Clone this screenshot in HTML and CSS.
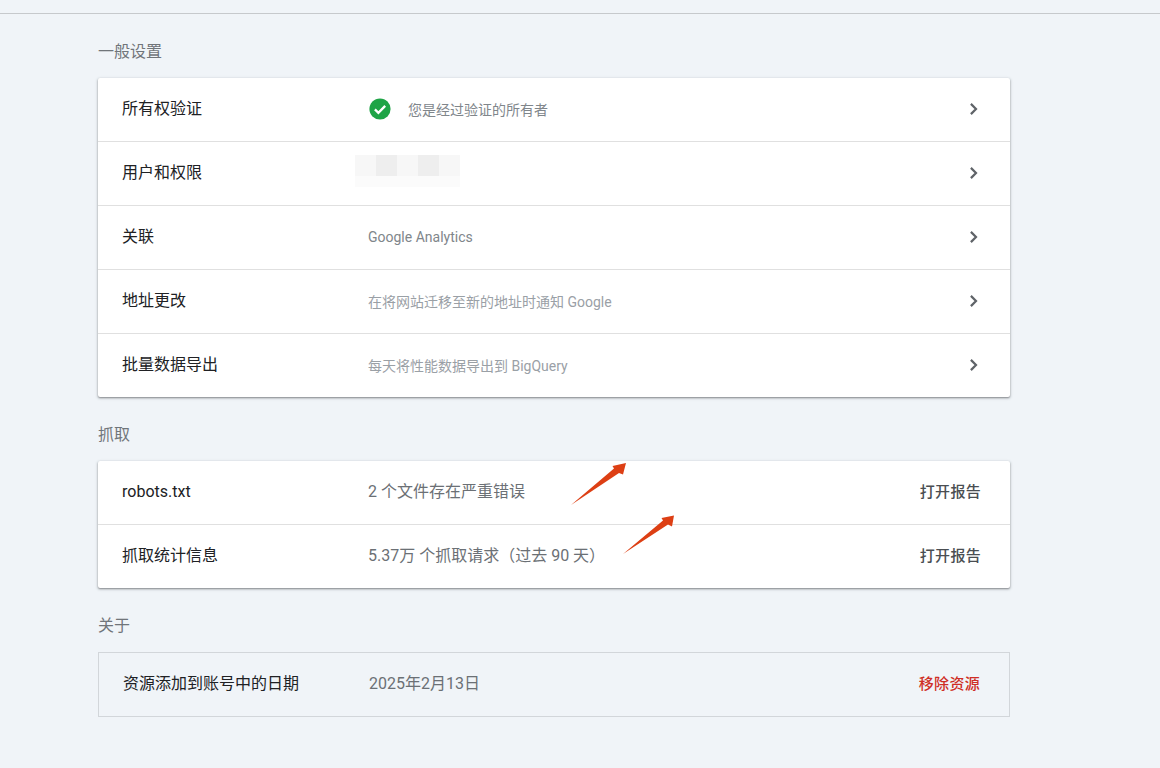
FILE: index.html
```html
<!DOCTYPE html>
<html lang="zh-CN">
<head>
<meta charset="utf-8">
<title>设置</title>
<link rel="stylesheet" href="styles.css">
</head>
<body>
<div class="topbar"></div>
<main class="content">
  <h2 class="section-title">一般设置</h2>
  <section class="card">
    <div class="row">
      <div class="label">所有权验证</div>
      <div class="value value-check">
        <svg class="check" viewBox="0 0 24 24" width="24" height="24"><circle cx="12" cy="12" r="10.600" fill="#1ea446"/><path d="M6.900 12.400l3.500 3.500 6.800-7" fill="none" stroke="#fff" stroke-width="2.300"/></svg>
        <span class="small soft drop">您是经过验证的所有者</span>
      </div>
      <svg class="chev" viewBox="0 0 12 12" width="12" height="12"><path d="M2.900 0.900L8 6l-5.100 5.100" fill="none" stroke="#5f6368" stroke-width="2.200"/></svg>
    </div>
    <div class="row">
      <div class="label">用户和权限</div>
      <div class="value">
        <div class="blur">
          <i class="b1"></i><i class="b2"></i><i class="b1"></i><i class="b2"></i><i class="b1"></i>
          <i class="b3"></i><i class="b3"></i><i class="b3"></i><i class="b3"></i><i class="b3"></i>
        </div>
      </div>
      <svg class="chev" viewBox="0 0 12 12" width="12" height="12"><path d="M2.900 0.900L8 6l-5.100 5.100" fill="none" stroke="#5f6368" stroke-width="2.200"/></svg>
    </div>
    <div class="row">
      <div class="label">关联</div>
      <div class="value small soft">Google Analytics</div>
      <svg class="chev" viewBox="0 0 12 12" width="12" height="12"><path d="M2.900 0.900L8 6l-5.100 5.100" fill="none" stroke="#5f6368" stroke-width="2.200"/></svg>
    </div>
    <div class="row">
      <div class="label">地址更改</div>
      <div class="value small faint drop">在将网站迁移至新的地址时通知 Google</div>
      <svg class="chev" viewBox="0 0 12 12" width="12" height="12"><path d="M2.900 0.900L8 6l-5.100 5.100" fill="none" stroke="#5f6368" stroke-width="2.200"/></svg>
    </div>
    <div class="row">
      <div class="label">批量数据导出</div>
      <div class="value small faint drop">每天将性能数据导出到 BigQuery</div>
      <svg class="chev" viewBox="0 0 12 12" width="12" height="12"><path d="M2.900 0.900L8 6l-5.100 5.100" fill="none" stroke="#5f6368" stroke-width="2.200"/></svg>
    </div>
  </section>

  <h2 class="section-title">抓取</h2>
  <section class="card">
    <div class="row">
      <div class="label">robots.txt</div>
      <div class="value">2 个文件存在严重错误</div>
      <a class="action">打开报告</a>
    </div>
    <div class="row">
      <div class="label">抓取统计信息</div>
      <div class="value">5.37万 个抓取请求（过去 90 天）</div>
      <a class="action">打开报告</a>
    </div>
    <svg class="arrow arrow-one" viewBox="0 0 56 44" width="56" height="44"><path d="M0 44L43 7.500 41.500 5 55 2 52 13.500 48 12Z" fill="#dd3f14"/></svg>
    <svg class="arrow arrow-two" viewBox="0 0 52 40" width="52" height="40"><path d="M0 40L40 6.500 38.500 4 51 1.500 49 12.500 45 10.500Z" fill="#dd3f14"/></svg>
  </section>

  <h2 class="section-title">关于</h2>
  <section class="card card-flat">
    <div class="row">
      <div class="label">资源添加到账号中的日期</div>
      <div class="value">2025年2月13日</div>
      <a class="action danger">移除资源</a>
    </div>
  </section>
</main>
</body>
</html>
```
FILE: styles.css
```css
* { box-sizing: border-box; }

html, body { height: 100%; }

body {
  margin: 0;
  background: #f0f4f8;
  color: #202124;
  font-family: Roboto, "Noto Sans CJK SC", sans-serif;
  font-size: 16px;
  overflow: hidden;
}

.topbar {
  height: 14px;
  border-bottom: 1px solid #c6c9cc;
}

.content {
  width: 912px;
  margin-left: 98px;
}

.section-title {
  margin: 0;
  height: 64px;
  padding-top: 12px;
  display: flex;
  align-items: center;
  font-size: 16px;
  font-weight: 400;
  color: #70757a;
  line-height: 24px;
}

.card {
  position: relative;
  background: #fff;
  border-radius: 2px;
  box-shadow: 0 1px 2px rgba(60, 64, 67, .55), 0 1px 3px 1px rgba(60, 64, 67, .1);
}

.card-flat {
  background: transparent;
  border: 1px solid #d2d6da;
  border-radius: 0;
  box-shadow: none;
}

.row {
  display: flex;
  align-items: center;
  height: 64px;
  padding: 0 29px 1px 24px;
  border-bottom: 1px solid #e0e0e0;
}

.row:last-of-type {
  height: 63px;
  border-bottom: 0;
}

.label {
  flex: 0 0 246px;
  line-height: 24px;
}

.value {
  flex: 1;
  color: #6b7075;
  line-height: 24px;
}

.value-check {
  display: flex;
  align-items: center;
  gap: 16px;
}

.small { font-size: 14px; }

.drop { padding-top: 2px; }

.value.soft, .soft { color: #80868b; }

.value.faint { color: #9aa0a6; }

.chev { flex: none; margin-right: 1px; }

.action {
  flex: none;
  font-size: 15px;
  line-height: 24px;
  font-weight: 500;
  letter-spacing: .3px;
  color: #4a4e52;
}

.action.danger { color: #cf2e25; }

.blur {
  display: grid;
  grid-template-columns: repeat(5, 21px);
  grid-template-rows: 21px 11px;
  width: 105px;
  height: 32px;
  margin-left: -13px;
  margin-top: -4px;
}

.blur .b1 { background: #f7f7f7; }
.blur .b2 { background: #eeeeee; }
.blur .b3 { background: #fbfbfb; }

.arrow {
  position: absolute;
  pointer-events: none;
}

.arrow-one { left: 473px; top: 0; }
.arrow-two { left: 525px; top: 53px; }
```
